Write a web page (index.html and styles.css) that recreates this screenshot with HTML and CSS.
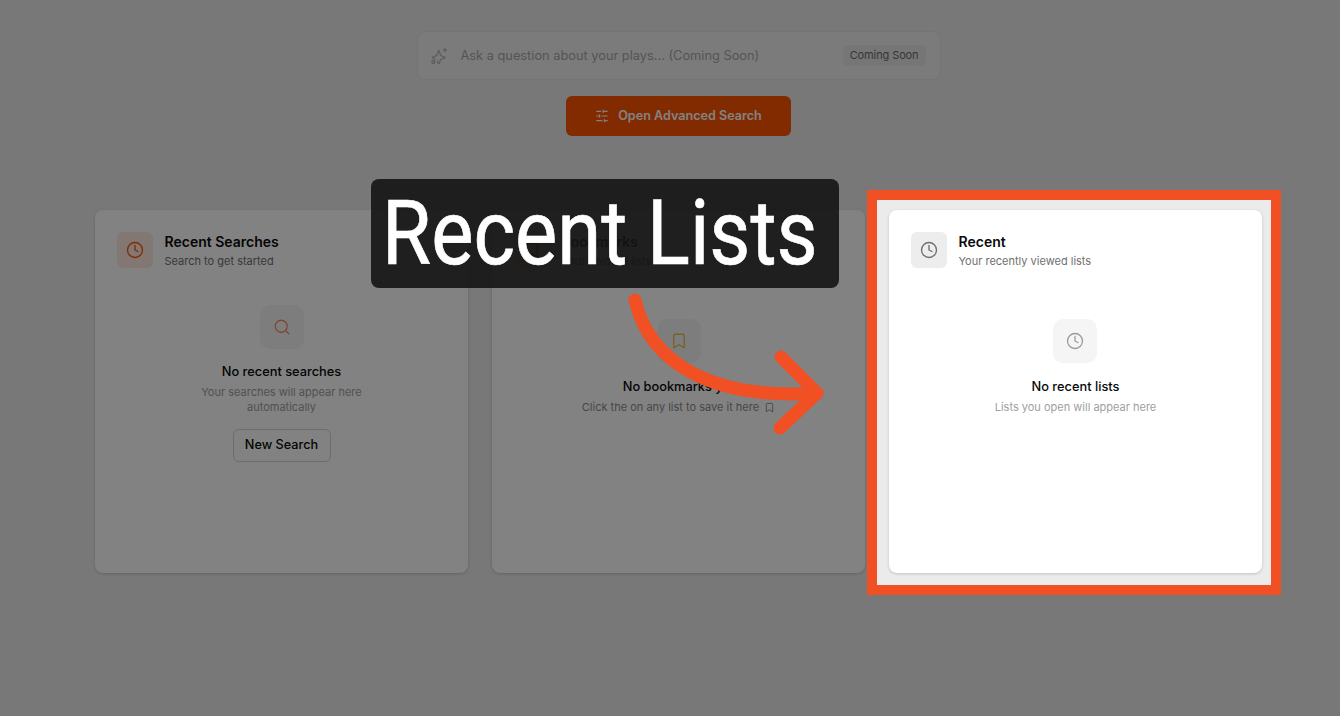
FILE: index.html
```html
<!DOCTYPE html>
<html lang="en">
<head>
<meta charset="utf-8">
<title>Recent Lists</title>
<link rel="stylesheet" href="styles.css">
</head>
<body>
<svg class="defs" aria-hidden="true">
  <symbol id="clock" viewBox="0 0 24 24"><circle cx="12" cy="12" r="10"/><polyline points="12 6 12 12 16 14"/></symbol>
  <symbol id="search" viewBox="0 0 24 24"><circle cx="11" cy="11" r="8"/><path d="m21 21-4.3-4.3"/></symbol>
  <symbol id="bookmark" viewBox="0 0 24 24"><path d="m19 21-7-4-7 4V5a2 2 0 0 1 2-2h10a2 2 0 0 1 2 2v16z"/></symbol>
  <symbol id="sliders" viewBox="0 0 24 24"><path d="M21 4h-7M10 4H3M21 12h-9M8 12H3M21 20h-5M12 20H3M14 2v4M8 10v4M16 18v4"/></symbol>
  <symbol id="sparkle" viewBox="0 0 24 24"><path d="M6.6 15.9 3.6 14.6a.6.6 0 0 1 0-1.1l4.4-1.6a2.5 2.5 0 0 0 1.5-1.5l1.6-5.2a.6.6 0 0 1 1.1 0l1.6 5.2a2.5 2.5 0 0 0 1.5 1.5l4.4 1.6a.6.6 0 0 1 0 1.1l-4.4 1.6a2.5 2.5 0 0 0-1.5 1.5l-1.6 4.2a.6.6 0 0 1-1.1 0l-1.4-3.4"/><path d="M20 2v4M22 4h-4"/><circle cx="4.5" cy="20" r="2"/></symbol>
</svg>

<main class="page">
  <div class="search-bar">
    <svg class="icon sparkle"><use href="#sparkle"/></svg>
    <span class="placeholder">Ask a question about your plays... (Coming Soon)</span>
    <span class="badge">Coming Soon</span>
  </div>
  <button class="advanced">
    <svg class="icon btn-icon"><use href="#sliders"/></svg>
    <span>Open Advanced Search</span>
  </button>

  <section class="cards">
    <article class="card">
      <header class="card-head">
        <span class="head-icon tint-orange"><svg class="icon"><use href="#clock"/></svg></span>
        <div class="head-text">
          <h2>Recent Searches</h2>
          <p>Search to get started</p>
        </div>
      </header>
      <div class="empty empty-high">
        <span class="empty-icon orange"><svg class="icon"><use href="#search"/></svg></span>
        <h3>No recent searches</h3>
        <p class="narrow">Your searches will appear here automatically</p>
        <button class="ghost">New Search</button>
      </div>
    </article>

    <article class="card">
      <header class="card-head">
        <span class="head-icon tint-yellow"><svg class="icon"><use href="#bookmark"/></svg></span>
        <div class="head-text">
          <h2>Bookmarks</h2>
          <p>Your favorite lists</p>
        </div>
      </header>
      <div class="empty">
        <span class="empty-icon yellow"><svg class="icon"><use href="#bookmark"/></svg></span>
        <h3>No bookmarks yet</h3>
        <p class="inline">Click the on any list to save it here <svg class="icon mini"><use href="#bookmark"/></svg></p>
      </div>
    </article>

    <article class="card">
      <header class="card-head">
        <span class="head-icon tint-grey"><svg class="icon"><use href="#clock"/></svg></span>
        <div class="head-text">
          <h2>Recent</h2>
          <p>Your recently viewed lists</p>
        </div>
      </header>
      <div class="empty">
        <span class="empty-icon grey"><svg class="icon"><use href="#clock"/></svg></span>
        <h3>No recent lists</h3>
        <p>Lists you open will appear here</p>
      </div>
    </article>
  </section>
</main>

<div class="spotlight"></div>
<svg class="arrow" viewBox="0 0 1340 716" aria-hidden="true">
  <path d="M635 300C650 365 715 400 817 393"/>
  <path d="M781 357L817 393L780 428"/>
</svg>
<div class="callout"><span>Recent Lists</span></div>
</body>
</html>
```
FILE: styles.css
```css
* { box-sizing: border-box; }
html, body { margin: 0; height: 100%; overflow: hidden; }
body { background: #ebebeb; font-family: Inter, "Liberation Sans", sans-serif; color: #0a0a0a; }
.defs { display: none; }
.icon { fill: none; stroke: currentColor; stroke-width: 2; stroke-linecap: round; stroke-linejoin: round; display: block; }

.page { display: flex; flex-direction: column; align-items: center; padding: 31px 78px 0 95px; }

.search-bar { width: 524px; height: 49px; display: flex; align-items: center; padding: 0 14px 0 12px; background: #f2f2f2; border: 1px solid #e4e4e4; border-radius: 8px; }
.sparkle { width: 18px; height: 18px; color: #b5b5b5; margin-right: 13px; stroke-width: 1.7; }
.placeholder { flex: 1; font-size: 12.8px; line-height: 16px; color: #a6a6a6; }
.badge { padding: 4px 7px; font-size: 11px; line-height: 13px; letter-spacing: -.01em; color: #6b6b6b; background: #e8e8e8; border-radius: 5px; }

.advanced { width: 225px; height: 40px; margin-top: 16px; padding: 0 0 1px 1px; display: flex; align-items: center; justify-content: center; gap: 9px; border: 0; border-radius: 6px; background: #ff5400; color: #fff; font: 600 12.6px Inter, sans-serif; }
.btn-icon { width: 14px; height: 14px; margin-left: -1px; }

.cards { width: 100%; margin-top: 74px; display: grid; grid-template-columns: repeat(3, 1fr); gap: 24px; }
.card { height: 363px; padding: 22px; background: #fff; border-radius: 8px; box-shadow: 0 1px 3px rgba(0,0,0,.18); }
.card-head { display: flex; align-items: flex-start; gap: 11.5px; }
.head-text { padding-top: 1px; }
.head-icon { width: 36px; height: 36px; border-radius: 6px; display: flex; align-items: center; justify-content: center; flex: none; }
.head-icon .icon { width: 18px; height: 18px; stroke-width: 1.8; }
.tint-orange { background: #ffe9df; color: #ff5400; }
.tint-yellow { background: #fff3cf; color: #7a5200; }
.tint-grey { background: #ededed; color: #6f6f6f; }
h2 { margin: 0; font-size: 14px; line-height: 18px; font-weight: 600; }
.card-head p { margin: 3px 0 0; font-size: 11px; line-height: 15px; color: #707070; }

.empty { display: flex; flex-direction: column; align-items: center; text-align: center; margin-top: 50px; }
.empty-high { margin-top: 36px; }
.empty-icon { width: 44px; height: 44px; border-radius: 10px; background: #f5f5f5; display: flex; align-items: center; justify-content: center; margin-bottom: 16px; }
.empty-high .empty-icon { margin-bottom: 15px; }
.empty-icon .icon { width: 18px; height: 18px; stroke-width: 1.7; }
.orange { color: #f0906a; }
.yellow { color: #e9bd45; }
.grey { color: #9a9a9a; margin-right: 1px; }
h3 { margin: 0; font-size: 12.8px; line-height: 16px; font-weight: 500; }
.empty p { margin: 5px 0 0; font-size: 11px; line-height: 15px; color: #a0a0a0; }
.empty .narrow { width: 180px; }
.empty .inline { display: flex; align-items: center; gap: 5px; color: #8c8c8c; }
.mini { width: 11px; height: 11px; }
.ghost { width: 98px; height: 33px; margin-top: 14px; padding: 0 0 2px; background: #fff; border: 1px solid #d6d6d6; border-radius: 6px; font: 500 12.7px Inter, sans-serif; color: #0a0a0a; }

.spotlight { position: absolute; left: 867px; top: 190px; width: 414px; height: 405px; border: 10px solid #f15025; box-shadow: 0 0 0 2000px rgba(0,0,0,.49); }
.arrow { position: absolute; left: 0; top: 0; width: 1340px; height: 716px; fill: none; stroke: #f15025; stroke-width: 13; stroke-linecap: round; stroke-linejoin: round; }
.callout { position: absolute; left: 371px; top: 179px; width: 468px; height: 109px; padding-right: 10px; border-radius: 8px; background: rgba(20,20,20,.9); display: flex; align-items: center; justify-content: center; }
.callout span { font: 400 91px/1 Roboto, sans-serif; -webkit-text-stroke: .7px #fff; color: #fff; white-space: nowrap; transform: scaleX(.875); }
```
